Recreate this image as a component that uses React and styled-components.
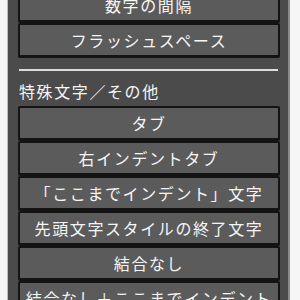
import React from 'react';
import styled, { createGlobalStyle } from 'styled-components';

const GlobalStyle = createGlobalStyle`
	html, body {
		margin:0;
		padding:0;
		background:#f6f6f6;
		overflow:hidden;
	}
`;

const topButtons = ["数字の間隔", "フラッシュスペース"];
const otherButtons = [
	"タブ",
	"右インデントタブ",
	"「ここまでインデント」文字",
	"先頭文字スタイルの終了文字",
	"結合なし",
	"結合なし＋ここまでインデント",
];

function App() {
	return (
		<>
			<GlobalStyle />
			<Page>
				<Panel>
					<ButtonList $offset={-12}>
						{topButtons.map((label) => (
							<Button key={label}>{label}</Button>
						))}
					</ButtonList>
					<Divider />
					<Heading>特殊文字／その他</Heading>
					<ButtonList>
						{otherButtons.map((label) => (
							<Button key={label}>{label}</Button>
						))}
					</ButtonList>
				</Panel>
			</Page>
		</>
	);
}

export default App;

const Page = styled.div`
	height:300px;
	display:flex;
	padding-left:7px;
	font-family:"Noto Sans CJK JP", "Noto Sans", sans-serif;
`;

const Panel = styled.div`
	width:283px;
	height:300px;
	box-sizing:border-box;
	background:#4b4b4b;
	border-left:1px solid #bdbdbd;
	border-right:2px solid #8a8a8a;
	padding:0 8px 0 10px;
	display:flex;
	flex-direction:column;
	overflow:hidden;
	& > * {
		flex-shrink:0;
	}
`;

const ButtonList = styled.div`
	display:flex;
	flex-direction:column;
	gap:1px;
	margin-top:${(p) => p.$offset || 0}px;
`;

const Button = styled.div`
	height:34px;
	flex-shrink:0;
	box-sizing:border-box;
	border:2px solid #141414;
	border-radius:2px;
	background:#5b5b5b;
	color:#f6f6f6;
	font-size:16px;
	letter-spacing:1.6px;
	display:flex;
	align-items:center;
	justify-content:center;
	white-space:nowrap;
	box-shadow:0 1px 0 #141414;
`;

const Divider = styled.div`
	height:2px;
	margin:12px 2px 0 1px;
	background:#dcdcdc;
`;

const Heading = styled.div`
	color:#f6f6f6;
	font-size:16px;
	letter-spacing:1.6px;
	line-height:24px;
	padding:8px 0 0 1px;
	height:35px;
	box-sizing:border-box;
`;
